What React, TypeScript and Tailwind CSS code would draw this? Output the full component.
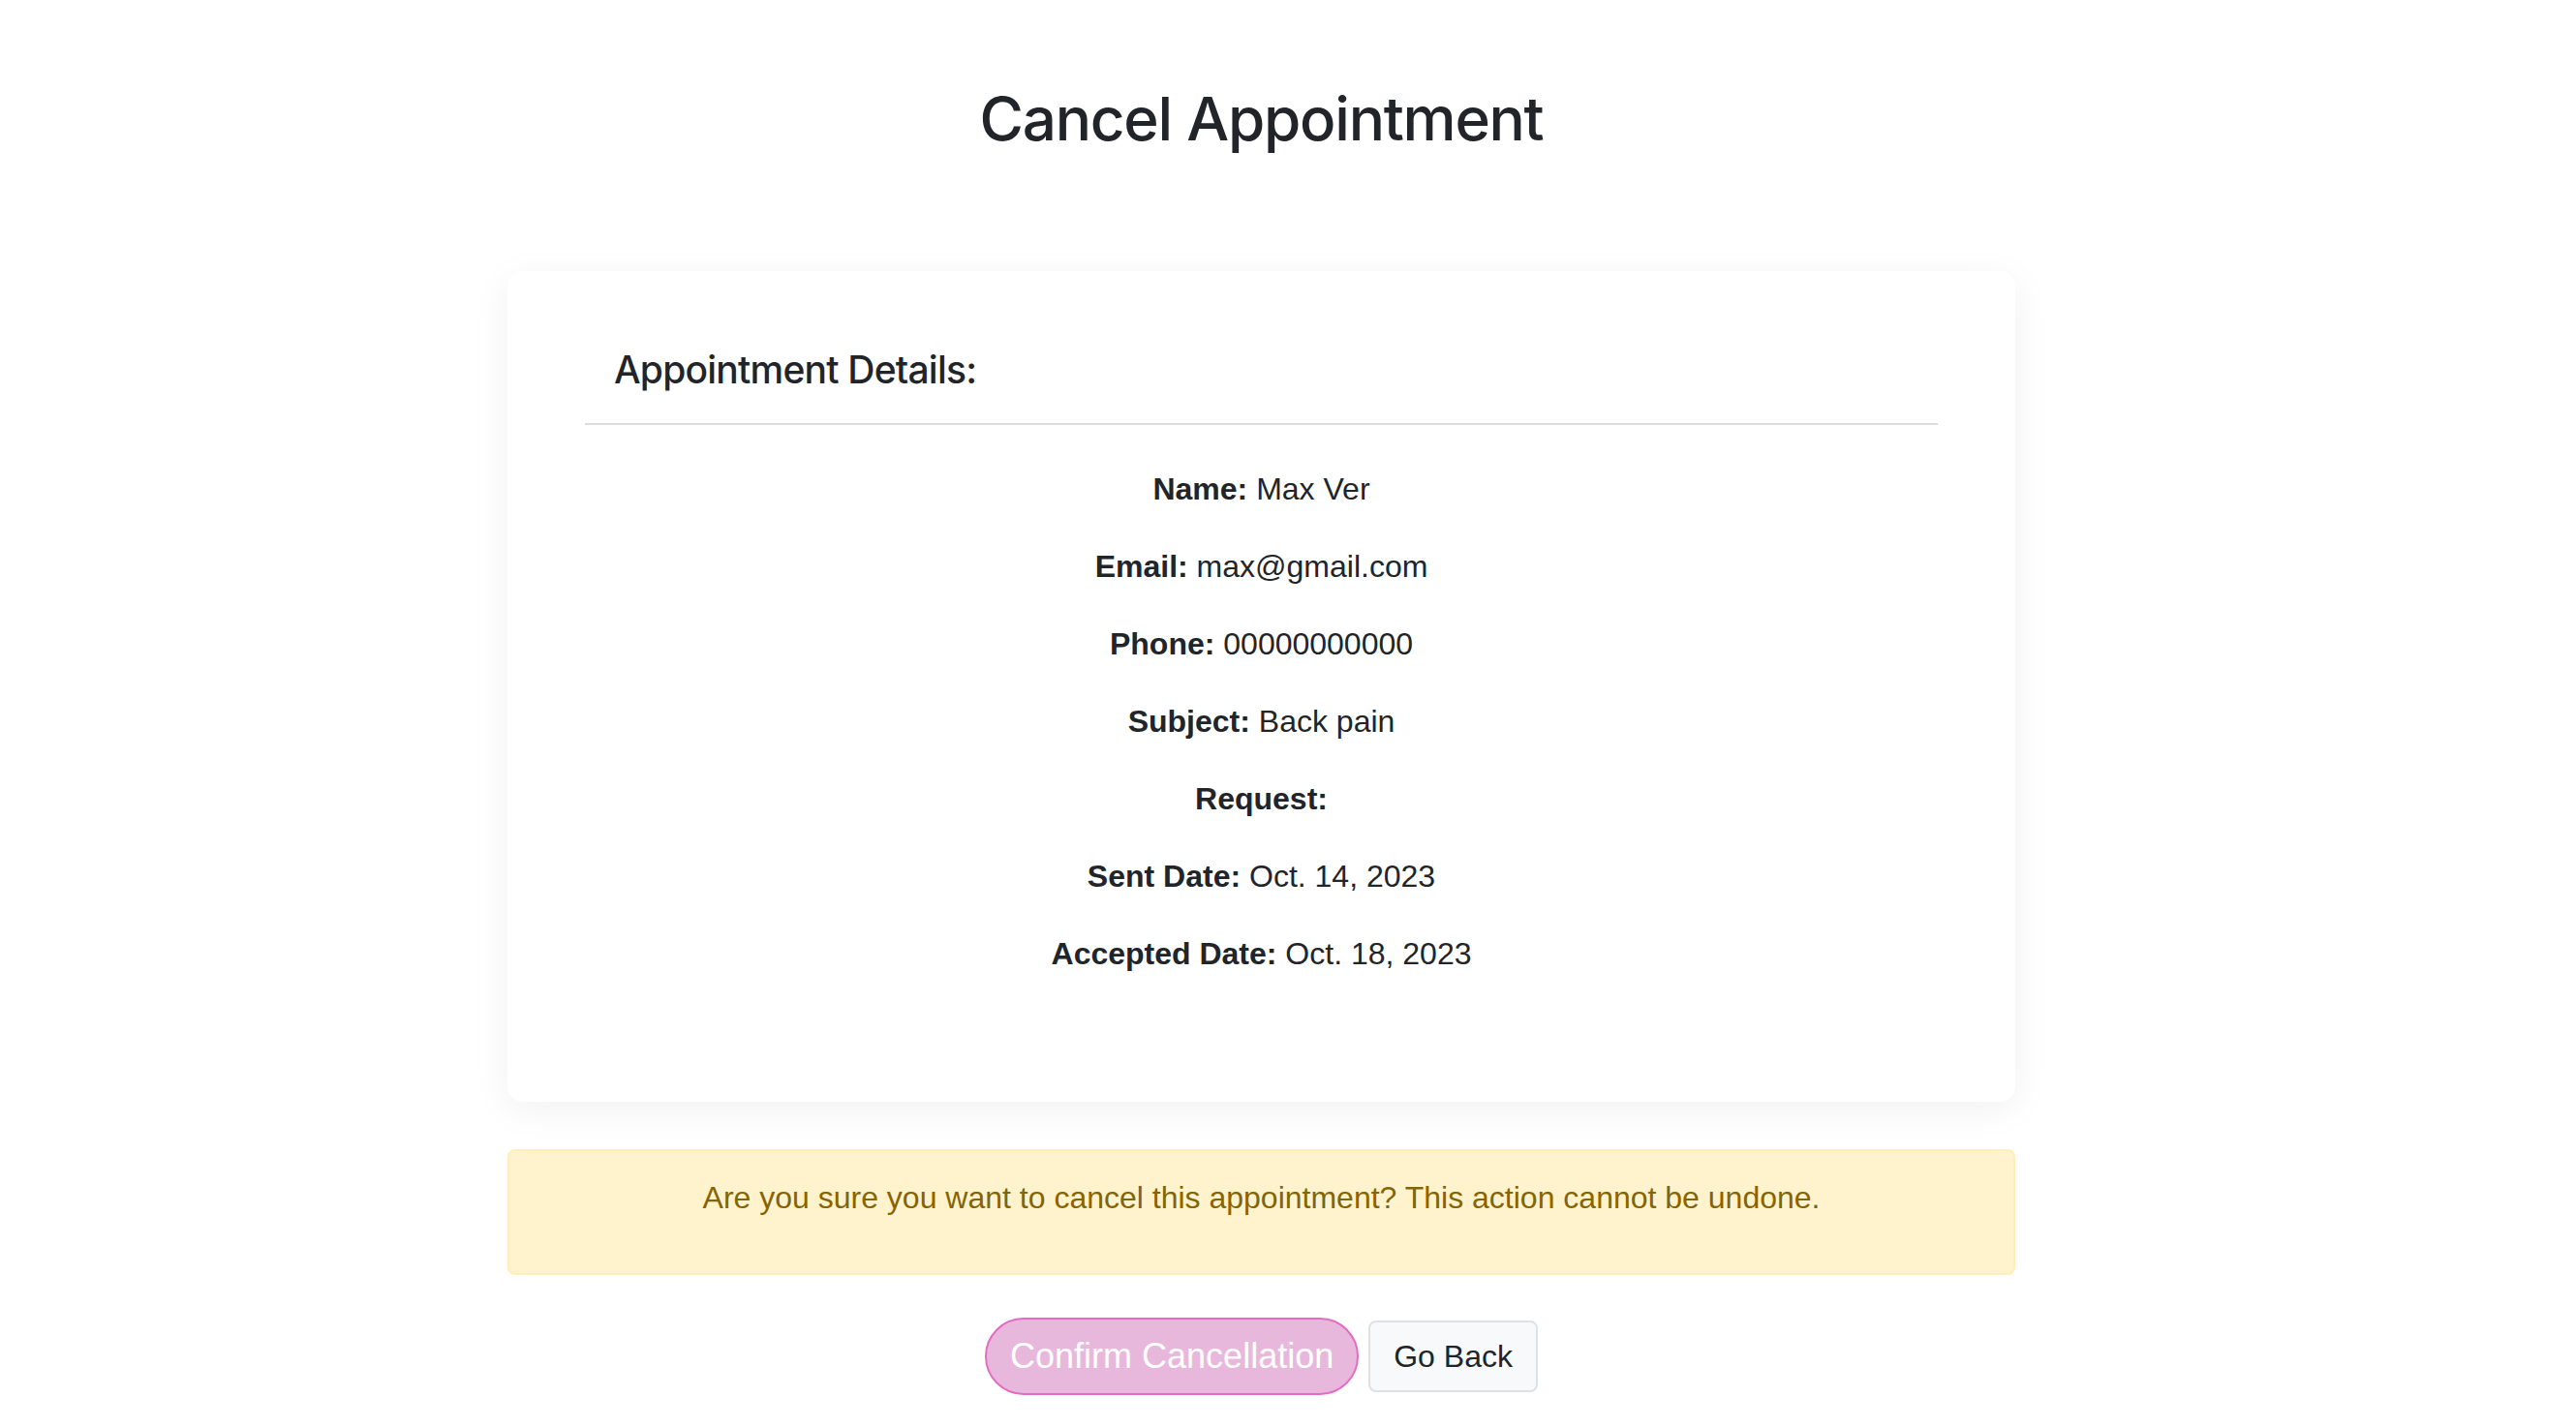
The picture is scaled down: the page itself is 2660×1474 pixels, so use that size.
import React from "react";

const details: { label: string; value: string }[] = [
  { label: "Name:", value: "Max Ver" },
  { label: "Email:", value: "max@gmail.com" },
  { label: "Phone:", value: "00000000000" },
  { label: "Subject:", value: "Back pain" },
  { label: "Request:", value: "" },
  { label: "Sent Date:", value: "Oct. 14, 2023" },
  { label: "Accepted Date:", value: "Oct. 18, 2023" },
];

export default function App() {
  return (
    <div className="min-h-screen bg-white pr-[55px] pt-[84px] pb-[32px] font-['Liberation_Sans',Arial,sans-serif] text-[#212529]">
      <div className="mx-auto w-[1557px]">
        <h2 className="text-center font-['Inter',sans-serif] text-[62px] font-medium leading-[77px] tracking-[-0.02em]">
          Cancel Appointment
        </h2>

        <div className="mt-[119px] rounded-[16px] bg-white px-[80px] pt-[78px] pb-[129px] shadow-[0_8px_40px_rgba(0,0,0,0.06)]">
          <h4 className="pl-[30px] font-['Inter',sans-serif] text-[39px] font-medium leading-[48px] tracking-[-0.02em]">
            Appointment Details:
          </h4>
          <hr className="mt-[31px] border-t-2 border-[#dcdcdc]" />
          <div className="mt-[42px] flex flex-col gap-[32px] text-center text-[32px] leading-[48px]">
            {details.map((item) => (
              <p key={item.label}>
                <span className="font-bold">{item.label}</span>
                {item.value ? ` ${item.value}` : ""}
              </p>
            ))}
          </div>
        </div>

        <div className="mt-[49px] rounded-[8px] border-2 border-[#ffeeba] bg-[#fff3cd] px-[40px] pt-[24px] pb-[54px] text-center text-[32px] leading-[48px] text-[#856404]">
          Are you sure you want to cancel this appointment? This action cannot be undone.
        </div>

        <div className="mt-[44px] flex items-center justify-center gap-[10px]">
          <button
            type="button"
            className="rounded-full border-2 border-[#e46bc3] bg-[#e8b8dc] px-[24px] py-[11px] text-[36px] leading-[54px] text-white"
          >
            Confirm Cancellation
          </button>
          <button
            type="button"
            className="rounded-[8px] border-2 border-[#dee2e6] bg-[#f8f9fa] px-[24px] py-[11px] text-[32px] leading-[48px] text-[#212529]"
          >
            Go Back
          </button>
        </div>
      </div>
    </div>
  );
}
